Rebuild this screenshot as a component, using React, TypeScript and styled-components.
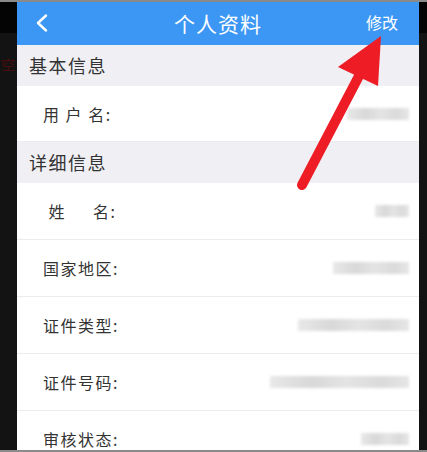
import styled, { createGlobalStyle } from "styled-components";

const GlobalStyle = createGlobalStyle`
  html, body {
    margin: 0;
    padding: 0;
    background: #121212;
  }
  body {
    font-family: "Noto Sans CJK SC", "Noto Sans", sans-serif;
  }
`;

interface Field {
  label: string;
  valueWidth: number;
}

const basicFields: Field[] = [{ label: "用 户 名:", valueWidth: 62 }];

const detailFields: Field[] = [
  { label: "\u2005姓\u3000\u2002名:", valueWidth: 34 },
  { label: "国家地区:", valueWidth: 76 },
  { label: "证件类型:", valueWidth: 111 },
  { label: "证件号码:", valueWidth: 139 },
  { label: "审核状态:", valueWidth: 48 },
];

const App = () => {
  return (
    <>
      <GlobalStyle />
      <Page>
        <TopEdge />
        <Stage>
          <Gutter $width={17}>
            <GhostText>空</GhostText>
          </Gutter>
          <Screen>
            <Header>
              <BackButton>
                <svg width="14" height="18" viewBox="0 0 14 18">
                  <path
                    d="M11 1.5 L3 9 L11 16.5"
                    fill="none"
                    stroke="#fff"
                    strokeWidth="2.4"
                    strokeLinecap="round"
                    strokeLinejoin="round"
                  />
                </svg>
              </BackButton>
              <Title>个人资料</Title>
              <EditButton>修改</EditButton>
            </Header>
            <Section $height={41}>基本信息</Section>
            {basicFields.map((field) => (
              <Row key={field.label} $height={56}>
                <Label>{field.label}</Label>
                <BlurValue style={{ width: field.valueWidth }} />
              </Row>
            ))}
            <Section $height={41}>详细信息</Section>
            {detailFields.map((field) => (
              <Row key={field.label} $height={57}>
                <Label>{field.label}</Label>
                <BlurValue style={{ width: field.valueWidth }} />
              </Row>
            ))}
          </Screen>
          <Gutter $width={8} />
        </Stage>
        <BottomEdge />
        <Arrow width="427" height="452" viewBox="0 0 427 452">
          <line
            x1="360"
            y1="74"
            x2="302"
            y2="185"
            stroke="#ee1c25"
            strokeWidth="10"
            strokeLinecap="round"
          />
          <polygon points="381,36 338,67 378,86" fill="#ee1c25" />
        </Arrow>
      </Page>
    </>
  );
};

export default App;

const Page = styled.div`
  position: relative;
  width: 427px;
  height: 452px;
  overflow: hidden;
  display: flex;
  flex-direction: column;
  background: #121212;
`;

const TopEdge = styled.div`
  height: 2px;
  flex-shrink: 0;
  background: #8a8a8a;
`;

const BottomEdge = styled.div`
  height: 2px;
  flex-shrink: 0;
  background: #8a8a8a;
`;

const Stage = styled.div`
  flex: 1;
  display: flex;
  overflow: hidden;
`;

const Gutter = styled.div<{ $width: number }>`
  width: ${(p) => p.$width}px;
  flex-shrink: 0;
  position: relative;
  overflow: hidden;
  background: linear-gradient(180deg, #040404 0px, #040404 31px, #131313 31px);
`;

const GhostText = styled.span`
  position: absolute;
  top: 54px;
  left: 1px;
  font-size: 14px;
  line-height: 16px;
  color: #4a0c0c;
  white-space: nowrap;
`;

const Screen = styled.div`
  flex: 1;
  display: flex;
  flex-direction: column;
  background: #fff;
`;

const Header = styled.div`
  height: 43px;
  flex-shrink: 0;
  background: #3c97f4;
  display: flex;
  align-items: center;
  justify-content: space-between;
  padding: 0 21px 0 18px;
  position: relative;
`;

const BackButton = styled.div`
  width: 14px;
  height: 18px;
  display: flex;
  margin-top: -1px;
`;

const Title = styled.div`
  position: absolute;
  left: 0;
  right: 0;
  top: 0;
  bottom: 2px;
  display: flex;
  align-items: center;
  justify-content: center;
  color: #fff;
  font-size: 21px;
  letter-spacing: 1px;
  pointer-events: none;
`;

const EditButton = styled.div`
  color: #fff;
  font-size: 16px;
  margin-top: -4px;
  position: relative;
`;

const Section = styled.div<{ $height: number }>`
  height: ${(p) => p.$height}px;
  flex-shrink: 0;
  background: #efeff4;
  display: flex;
  align-items: center;
  padding: 0 0 2px 12px;
  box-sizing: border-box;
  color: #333;
  font-size: 18px;
  letter-spacing: 1.5px;
`;

const Row = styled.div<{ $height: number }>`
  height: ${(p) => p.$height}px;
  flex-shrink: 0;
  box-sizing: border-box;
  display: flex;
  align-items: center;
  justify-content: space-between;
  padding: 0 10px 0 26px;
  border-bottom: 1px solid #ececec;
  background: #fff;
`;

const Label = styled.div`
  color: #333;
  font-size: 16px;
  letter-spacing: 1.5px;
  white-space: pre;
`;

const BlurValue = styled.div`
  height: 12px;
  background: linear-gradient(90deg, #e8e8e8, #d8d8d8 30%, #e4e4e4 55%, #dadada 80%, #e6e6e6);
  filter: blur(1.5px);
`;

const Arrow = styled.svg`
  position: absolute;
  left: 0;
  top: 0;
  pointer-events: none;
`;
